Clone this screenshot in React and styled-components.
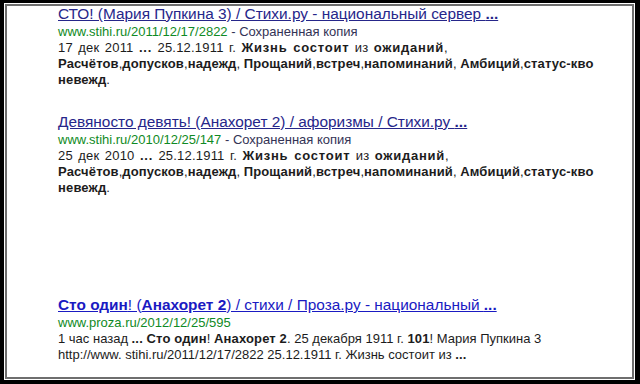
import React from "react";
import styled, { createGlobalStyle } from "styled-components";

const Global = createGlobalStyle`
  html, body { margin: 0; padding: 0; background: #fff; }
  body { font-family: "Liberation Sans", Arial, sans-serif; }
`;

const Frame = styled.div`
  width: 640px;
  height: 384px;
  box-sizing: border-box;
  border-style: solid;
  border-color: #000;
  border-width: 3px 5px 4px 4px;
  background: #fff;
  padding: 1px;
  overflow: hidden;
`;

const Inner = styled.div`
  height: 100%;
  box-sizing: border-box;
  border: 2px solid #6e6e6e;
  padding: 0 0 0 51px;
  overflow: hidden;
`;

const Result = styled.div`
  margin-top: ${(p) => p.$gap || 0}px;
`;

const Title = styled.a`
  display: block;
  font-family: "Liberation Sans", Arial, sans-serif;
  font-size: 15.4px;
  line-height: 16px;
  color: ${(p) => (p.$visited ? "#26268a" : "#1a1ac2")};
  text-decoration: underline;
  white-space: nowrap;
  margin-bottom: 2px;
  b { font-weight: bold; }
`;

const Url = styled.div`
  font-family: "Liberation Sans", Arial, sans-serif;
  font-size: 13px;
  line-height: 16px;
  color: #0f8a24;
  white-space: nowrap;
`;

const Cache = styled.span`
  color: #333355;
`;

const Snippet = styled.div`
  font-family: "Liberation Sans", Arial, sans-serif;
  font-size: 13px;
  line-height: 16px;
  color: #1c1c1c;
  white-space: nowrap;
  b { font-weight: bold; letter-spacing: 0.15px; }
`;

const WideLine = styled.span`
  word-spacing: 1.6px;
  letter-spacing: 0.2px;
  b { letter-spacing: 0.75px; }
`;

const StihiSnippet = ({ date }) => (
  <Snippet>
    <WideLine>
      {date} <b>...</b> 25.12.1911 г. <b>Жизнь состоит</b> из <b>ожиданий</b>,
    </WideLine>
    <br />
    <b>Расчётов</b>,<b>допусков</b>,<b>надежд</b>, <b>Прощаний</b>,<b>встреч</b>,<b>напоминаний</b>, <b>Амбиций</b>,<b>статус-кво</b>
    <br />
    <b>невежд</b>.
  </Snippet>
);

export default function App() {
  return (
    <>
      <Global />
      <Frame>
        <Inner>
          <Result>
            <Title $visited href="#">
              СТО! (Мария Пупкина 3) / Стихи.ру - национальный сервер <b>...</b>
            </Title>
            <Url>
              www.stihi.ru/2011/12/17/2822 <Cache>- Сохраненная копия</Cache>
            </Url>
            <StihiSnippet date="17 дек 2011" />
          </Result>
          <Result $gap={26}>
            <Title $visited href="#">
              Девяносто девять! (Анахорет 2) / афоризмы / Стихи.ру <b>...</b>
            </Title>
            <Url>
              www.stihi.ru/2010/12/25/147 <Cache>- Сохраненная копия</Cache>
            </Url>
            <StihiSnippet date="25 дек 2010" />
          </Result>
          <Result $gap={101}>
            <Title href="#">
              <b>Сто один</b>! (<b>Анахорет 2</b>) / стихи / Проза.ру - национальный <b>...</b>
            </Title>
            <Url>www.proza.ru/2012/12/25/595</Url>
            <Snippet>
              1 час назад <b>...</b> <b>Сто один</b>! <b>Анахорет 2</b>. 25 декабря 1911 г. <b>101</b>! Мария Пупкина 3
              <br />
              http://www. stihi.ru/2011/12/17/2822 25.12.1911 г. Жизнь состоит из <b>...</b>
            </Snippet>
          </Result>
        </Inner>
      </Frame>
    </>
  );
}
